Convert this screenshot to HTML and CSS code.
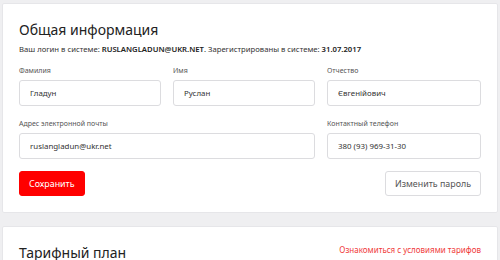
FILE: index.html
```html
<!DOCTYPE html>
<html lang="ru">
<head>
    <meta charset="UTF-8">
    <meta name="viewport" content="width=device-width, initial-scale=1.0">
    <title>Профиль</title>
    <link rel="stylesheet" href="styles.css">
</head>
<body>
    <div class="card">
        <h2 class="card-title">Общая информация</h2>
        <p class="login-info">
            Ваш логин в системе: <b>RUSLANGLADUN@UKR.NET</b>. Зарегистрированы в системе: <b>31.07.2017</b>
        </p>

        <div class="form-grid">
            <label class="field">
                <span class="field-label">Фамилия</span>
                <input class="field-input" type="text" value="Гладун">
            </label>
            <label class="field">
                <span class="field-label">Имя</span>
                <input class="field-input" type="text" value="Руслан">
            </label>
            <label class="field">
                <span class="field-label">Отчество</span>
                <input class="field-input" type="text" value="Євгенійович">
            </label>
            <label class="field field-wide">
                <span class="field-label">Адрес электронной почты</span>
                <input class="field-input" type="text" value="ruslangladun@ukr.net">
            </label>
            <label class="field">
                <span class="field-label">Контактный телефон</span>
                <input class="field-input" type="text" value="380 (93) 969-31-30">
            </label>
        </div>

        <div class="actions">
            <button class="btn btn-primary">Сохранить</button>
            <button class="btn btn-outline">Изменить пароль</button>
        </div>
    </div>

    <div class="card">
        <div class="card-head">
            <h2 class="card-title">Тарифный план</h2>
            <a href="#" class="tariff-link">Ознакомиться с условиями тарифов</a>
        </div>
    </div>
</body>
</html>
```

FILE: styles.css
```css
html {
    overflow: hidden;
}
body {
    margin: 0;
    padding: 3px 2px;
    background: #efeff1;
    font-family: "Noto Sans", "Open Sans", Arial, sans-serif;
    color: #333;
}
.card {
    background: #fff;
    border: 1px solid #e6e6e9;
    border-radius: 2px;
    padding: 16px 16px 16px 16px;
    margin-bottom: 13px;
}
.card-title {
    margin: 0;
    font-size: 14px;
    font-weight: 400;
    line-height: 20px;
    color: #222;
}
.login-info {
    margin: 4px 0 11px;
    font-size: 7.7px;
    line-height: 11px;
    color: #333;
}
.login-info b {
    font-weight: 600;
    color: #222;
}
.form-grid {
    display: grid;
    grid-template-columns: 142px 142px minmax(0, 1fr);
    column-gap: 12px;
    row-gap: 13px;
}
.field {
    display: flex;
    flex-direction: column;
    min-width: 0;
}
.field-wide {
    grid-column: span 2;
}
.field-label {
    font-size: 7px;
    line-height: 10px;
    margin-bottom: 4px;
    color: #555;
}
.field-input {
    width: 100%;
    min-width: 0;
    height: 26px;
    box-sizing: border-box;
    border: 1px solid #dcdcdf;
    border-radius: 3px;
    padding: 0 10px;
    font-family: inherit;
    font-size: 7.9px;
    color: #333;
    outline: none;
}
.actions {
    display: flex;
    justify-content: space-between;
    margin-top: 12px;
}
.btn {
    height: 25px;
    border-radius: 3px;
    font-family: inherit;
    font-size: 8.9px;
    cursor: pointer;
    padding: 0 9px;
}
.btn-primary {
    background: #ff0000;
    border: 1px solid #ff0000;
    color: #fff;
}
.btn-outline {
    background: #fff;
    border: 1px solid #dcdcdf;
    color: #555;
}
.card-head {
    display: flex;
    justify-content: space-between;
    align-items: flex-start;
    padding-bottom: 20px;
}
.tariff-link {
    margin-top: 1px;
    font-size: 8px;
    line-height: 11px;
    color: #f03a3a;
    text-decoration: none;
}
```
